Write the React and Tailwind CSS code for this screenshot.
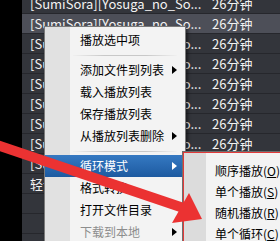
import React from 'react';

const rows = [
  { name: '[SumiSora][Yosuga_no_So...', time: '26分钟' },
  { name: '[SumiSora][Yosuga_no_So...', time: '26分钟', selected: true },
  { name: '[SumiSora][Yosuga_no_So...', time: '26分钟' },
  { name: '[SumiSora][Yosuga_no_So...', time: '26分钟' },
  { name: '[SumiSora][Yosuga_no_So...', time: '26分钟' },
  { name: '[SumiSora][Yosuga_no_So...', time: '26分钟' },
  { name: '[SumiSora][Yosuga_no_So...', time: '26分钟' },
  { name: '[SumiSora][Yosuga_no_So...', time: '26分钟' },
  { name: '[SumiSora][Yosuga_no_So...', time: '26分钟' },
  { name: '轻音少女 第二季', time: '24分钟' },
  { name: '', time: '' },
  { name: '', time: '' },
  { name: '', time: '' },
];

function Arrow({ white }) {
  return (
    <svg width="5" height="8" viewBox="0 0 5 8" className="absolute left-[127px]">
      <path d="M0 0 L5 4 L0 8 Z" fill={white ? '#ffffff' : '#000000'} />
    </svg>
  );
}

function Item({ label, sub, active, disabled }) {
  return (
    <div
      className={`relative h-[22px] flex items-center pl-[35px] ${
        active ? 'bg-[linear-gradient(#3579c2,#1d5aa0)] text-white' : disabled ? 'text-[#8d8d8d]' : 'text-black'
      }`}
    >
      <span>{label}</span>
      {sub && <Arrow white={active} />}
    </div>
  );
}

function Sep() {
  return (
    <div className="h-[8px] flex items-center pl-[28px] pr-[8px]">
      <div className="h-px w-full bg-[linear-gradient(to_right,#f0f0f0,#c8c8c8_30%,#c8c8c8_70%,#f0f0f0)]" />
    </div>
  );
}

function SubItem({ text, hot }) {
  return (
    <div className="h-[21px] flex items-center pl-[31px] whitespace-nowrap text-black">
      {text}(<span className="underline">{hot}</span>)
    </div>
  );
}

export default function App() {
  return (
    <div
      className="relative w-[280px] h-[241px] overflow-hidden bg-black flex"
      style={{ fontFamily: '"Noto Sans CJK SC", "Noto Sans", sans-serif' }}
    >
      <div className="w-[22px] shrink-0 bg-black" />
      <div className="flex-1 bg-[#303238] mt-[-6px] text-[13px] text-[#f2f2f2]">
        {rows.map((r, i) => (
          <div
            key={i}
            className={`h-[20px] flex items-center border-b border-[#26272c] whitespace-nowrap ${
              r.selected ? 'bg-[#4d4f58]' : 'bg-[#33353b]'
            }`}
          >
            <div className="w-[190px] pl-[8px] overflow-hidden">{r.name}</div>
            <div>{r.time}</div>
          </div>
        ))}
      </div>

      {/* context menu */}
      <div className="absolute left-[44px] top-[26px] w-[142px] h-[230px] border border-[#7a7a7a] shadow-[2px_2px_3px_rgba(0,0,0,0.5)] bg-[linear-gradient(to_right,#e1e1e1_25px,#f3f3f3_25px)] pt-[2px] text-[12px]">
        <Item label="播放选中项" />
        <Sep />
        <Item label="添加文件到列表" sub />
        <Item label="载入播放列表" />
        <Item label="保存播放列表" />
        <Item label="从播放列表删除" sub />
        <Sep />
        <Item label="循环模式" sub active />
        <Item label="格式转换" />
        <Item label="打开文件目录" />
        <Item label="下载到本地" sub disabled />
      </div>

      {/* submenu */}
      <div className="absolute left-[182px] top-[151px] w-[120px] h-[100px] border border-[#6e6e6e] bg-[#f3f3f3] text-[12px]">
        <div className="h-full border-l border-t border-[#e23a3a] bg-[linear-gradient(to_right,#dcdcdc_22px,#f3f3f3_22px)] pt-[7px]">
          <SubItem text="顺序播放" hot="O" />
          <SubItem text="单个播放" hot="S" />
          <SubItem text="随机播放" hot="R" />
          <SubItem text="单个循环" hot="C" />
        </div>
      </div>

      {/* red annotation arrow */}
      <svg className="absolute left-0 top-0 pointer-events-none" width="280" height="241" viewBox="0 0 280 241">
        <line x1="-10" y1="142.6" x2="182" y2="207.5" stroke="#eb3232" strokeWidth="10" />
        <polygon points="189,193 202,219 172,223" fill="#eb3232" />
      </svg>
    </div>
  );
}
